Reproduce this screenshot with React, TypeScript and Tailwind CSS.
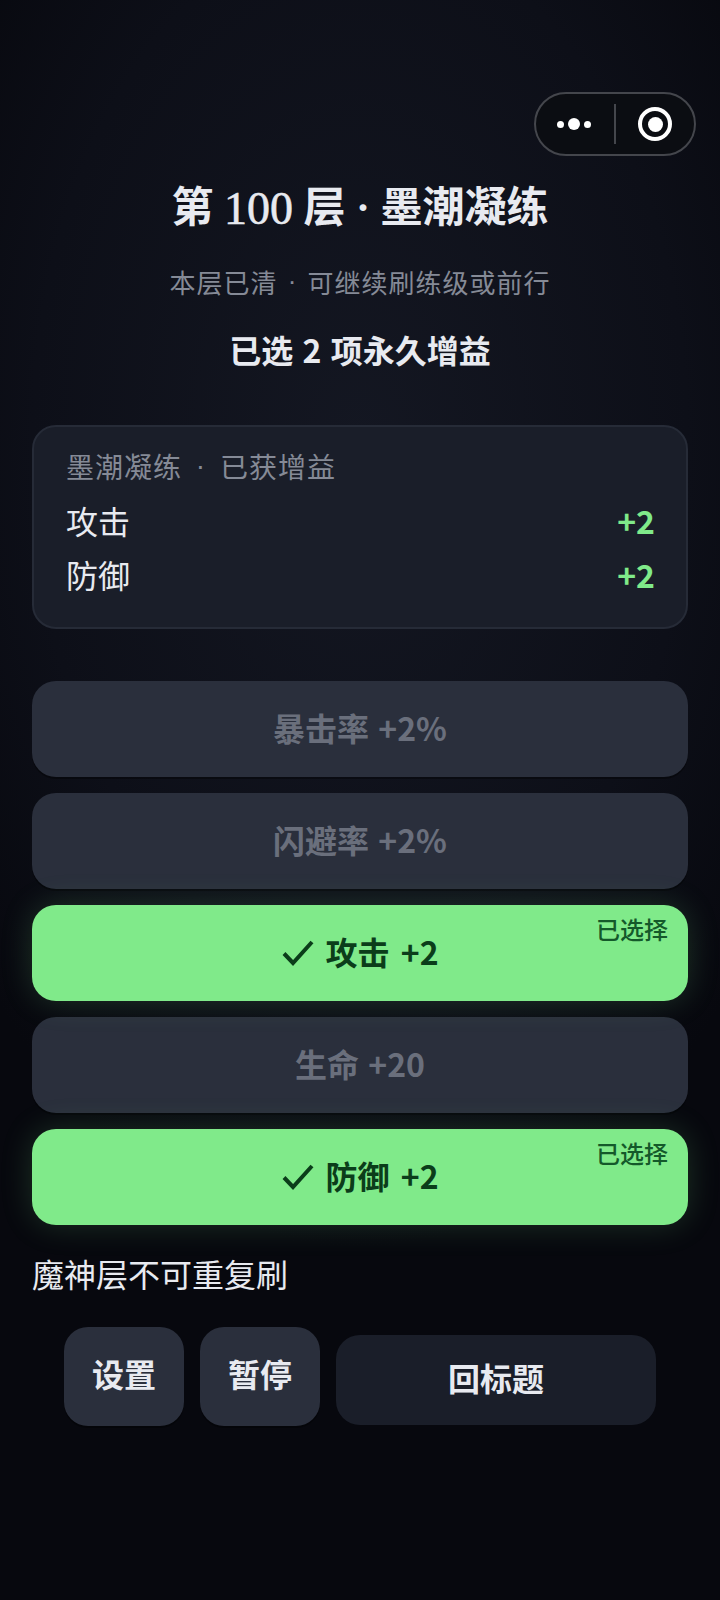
const cjk = "font-['Noto_Sans_CJK_SC',sans-serif]";

function Check() {
  return (
    <svg width="34" height="30" viewBox="0 0 34 30" fill="none" className="shrink-0">
      <path d="M3 15.5 L12 25 L31 4" stroke="#0b3d1a" strokeWidth="4" />
    </svg>
  );
}

function Option({ label, selected }: { label: string; selected?: boolean }) {
  if (selected) {
    return (
      <button className="relative h-[96px] w-full rounded-[24px] bg-[#80ea8a] flex items-center justify-center gap-[10px] text-[32px] font-bold [word-spacing:4px] text-[#0b3d1a] shadow-[0_0_32px_rgba(128,234,138,0.18)]">
        <Check />
        <span className="mb-[4px]">{label}</span>
        <span className="absolute right-[20px] top-[8px] text-[24px] leading-[32px] font-medium text-[#14592a]">已选择</span>
      </button>
    );
  }
  return (
    <button className="h-[96px] w-full rounded-[24px] bg-[#2a2f3c] pb-[4px] text-[32px] font-bold [word-spacing:2px] text-[#6a6f7c] shadow-[0_2px_0_rgba(0,0,0,0.35)]">
      {label}
    </button>
  );
}

export default function App() {
  return (
    <div className={`${cjk} relative h-[1600px] w-[720px] overflow-hidden bg-[radial-gradient(ellipse_70%_50%_at_50%_28%,#141722_0%,#0d0f18_65%,#07080e_100%)] px-[32px] pt-[180px]`}>
      <div className="absolute left-[534px] top-[92px] flex h-[64px] w-[162px] items-center rounded-full border-2 border-[#44464c] bg-[#0b0d12]">
        <div className="flex w-[76px] items-center justify-center gap-[4px]">
          <span className="h-[7px] w-[7px] rounded-full bg-white" />
          <span className="h-[12px] w-[12px] rounded-full bg-white" />
          <span className="h-[7px] w-[7px] rounded-full bg-white" />
        </div>
        <div className="ml-[2px] h-[40px] w-[2px] bg-[#44464c]" />
        <div className="flex flex-1 items-center justify-center">
          <div className="flex h-[34px] w-[34px] items-center justify-center rounded-full border-[4px] border-white">
            <span className="h-[15px] w-[15px] rounded-full bg-white" />
          </div>
        </div>
      </div>

      <h1 className="flex h-[56px] items-center justify-center font-['Liberation_Serif','Noto_Sans_CJK_SC',serif] text-[42px] font-bold whitespace-pre text-[#e8eaf0]">第 <span className="text-[46px] font-normal [-webkit-text-stroke:0.6px_#e8eaf0]">100</span> 层 · 墨潮凝练</h1>
      <p className="mt-[25px] flex h-[40px] items-center justify-center text-[26px] tracking-[1px] whitespace-pre text-[#858a96]">本层已清<span className="inline-block w-[30px] text-center font-['Liberation_Sans',sans-serif]">·</span>可继续刷练级或前行</p>
      <p className="mt-[28px] flex h-[40px] items-center justify-center text-[32px] font-bold [word-spacing:2px] whitespace-pre text-[#e8eaf0]">已选 2 项永久增益</p>

      <section className="mt-[56px] h-[204px] rounded-[24px] border-2 border-[#262b37] bg-[#1a1e29] pl-[32px] pr-[31px] pt-[19px]">
        <div className="flex h-[40px] items-center text-[28px] tracking-[1px] whitespace-pre text-[#858a96]">墨潮凝练<span className="inline-block w-[38px] text-center font-['Liberation_Sans',sans-serif]">·</span>已获增益</div>
        <div className="mt-[14px] flex h-[40px] items-center justify-between text-[32px] text-[#e8eaf0]">
          <span>攻击</span>
          <span className="font-bold text-[#80ea8a]">+2</span>
        </div>
        <div className="mt-[14px] flex h-[40px] items-center justify-between text-[32px] text-[#e8eaf0]">
          <span>防御</span>
          <span className="font-bold text-[#80ea8a]">+2</span>
        </div>
      </section>

      <div className="mt-[52px] flex flex-col gap-[16px]">
        <Option label="暴击率 +2%" />
        <Option label="闪避率 +2%" />
        <Option label="攻击 +2" selected />
        <Option label="生命 +20" />
        <Option label="防御 +2" selected />
      </div>

      <p className="mt-[26px] flex h-[44px] items-center text-[32px] text-[#e8eaf0]">魔神层不可重复刷</p>

      <div className="mt-[32px] flex items-end gap-[16px] px-[32px]">
        <button className="h-[99px] w-[120px] rounded-[24px] bg-[#2a2f3c] pb-[8px] text-[32px] font-bold text-[#e8eaf0] shadow-[0_2px_0_rgba(0,0,0,0.35)]">设置</button>
        <button className="h-[99px] w-[120px] rounded-[24px] bg-[#2a2f3c] pb-[8px] text-[32px] font-bold text-[#e8eaf0] shadow-[0_2px_0_rgba(0,0,0,0.35)]">暂停</button>
        <button className="mb-[1px] h-[90px] w-[320px] rounded-[24px] bg-[#1a1e29] pb-[6px] text-[32px] font-bold text-[#e8eaf0]">回标题</button>
      </div>
    </div>
  );
}
